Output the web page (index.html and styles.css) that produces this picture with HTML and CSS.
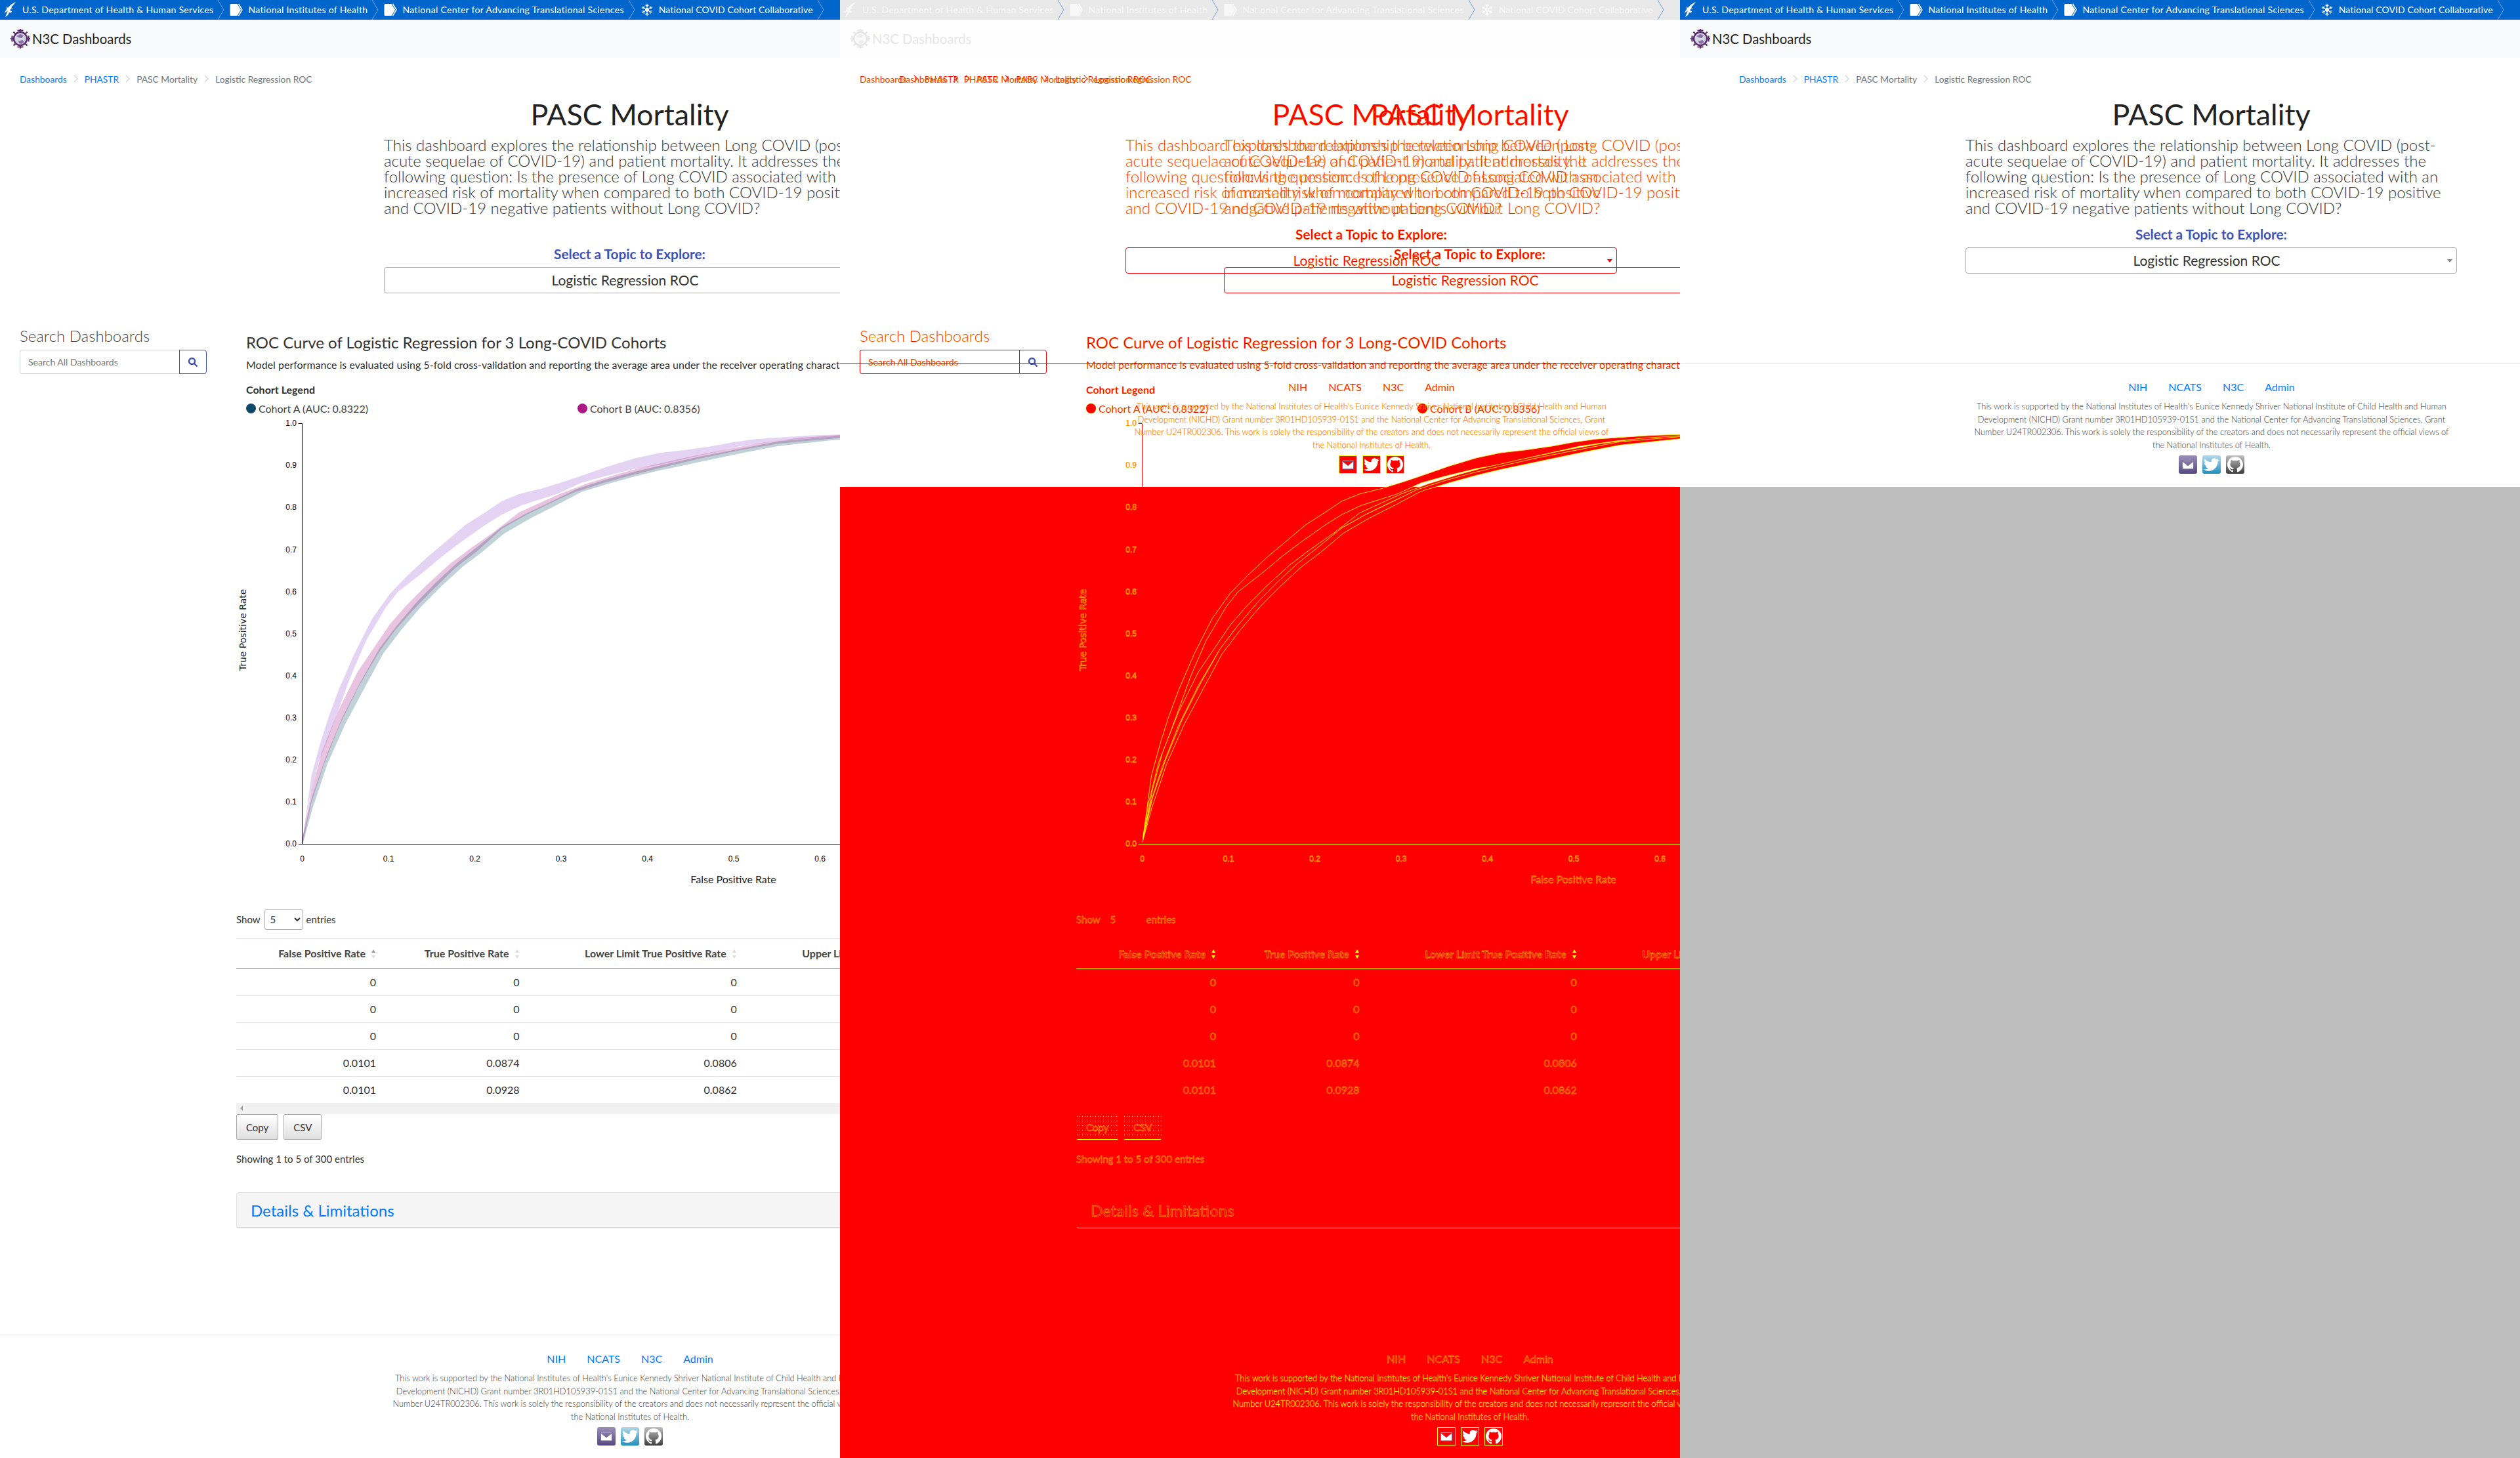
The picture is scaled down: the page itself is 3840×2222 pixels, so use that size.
FILE: index.html
```html
<!DOCTYPE html>
<html lang="en">
<head>
  <meta charset="UTF-8">
  <title>N3C Dashboards - PASC Mortality comparison</title>
  <link rel="stylesheet" href="styles.css">
</head>
<body>
  <!-- Shared drawings -->
  <svg class="sprite" aria-hidden="true">
    <defs>
      <path id="band-c" d="M199 1420L222 1220L245 1120L265 1045L290 965L330 855L375 750L420 675L465 620L515 565L570 510L610 470L660 432L700 400L745 378L800 362L860 340L905 322L970 295L1040 270L1100 255L1160 247L1230 235L1280 224L1340 214L1400 209L1480 203L1560 200L1560 205L1400 218L1300 235L1200 262L1100 290L1040 302L960 325L900 345L840 378L800 393L750 412L700 440L660 470L600 520L550 565L505 610L440 670L410 715L360 815L320 925L285 1040L262 1115L240 1180L215 1300Z"/>
      <path id="band-b" d="M199 1420L225 1260L250 1150L290 1030L340 910L380 840L420 770L460 715L510 655L570 590L620 545L680 495L745 435L800 405L850 378L920 347L1000 318L1050 302L1150 275L1250 250L1350 228L1450 212L1560 203L1560 208L1400 225L1300 245L1200 270L1100 298L1020 322L950 345L880 372L820 405L760 440L700 480L640 545L580 600L520 670L475 725L430 785L390 850L340 950L290 1070L250 1190L220 1300Z"/>
      <path id="band-a" d="M199 1420L225 1285L260 1165L300 1050L345 945L395 840L440 770L490 700L540 640L590 585L640 538L700 480L760 440L830 400L890 365L960 338L1030 315L1100 295L1200 268L1300 245L1400 222L1560 206L1560 212L1400 232L1300 255L1200 280L1100 305L1040 322L970 345L900 370L840 408L770 450L705 495L650 550L600 595L545 655L495 715L445 785L400 855L350 965L305 1065L260 1185L222 1320Z"/>
      <symbol id="icon-mail" viewBox="0 0 28 28"><path class="glyph" d="M4 7h20v15H4z M4 8l10 8 10-8"/></symbol>
      <symbol id="icon-bird" viewBox="0 0 24 24"><path class="glyph-solid" d="M23.953 4.57a10 10 0 01-2.825.775 4.958 4.958 0 002.163-2.723c-.951.555-2.005.959-3.127 1.184a4.92 4.92 0 00-8.384 4.482C7.69 8.095 4.067 6.13 1.64 3.162a4.822 4.822 0 00-.666 2.475c0 1.71.87 3.213 2.188 4.096a4.904 4.904 0 01-2.228-.616v.06a4.923 4.923 0 003.946 4.827 4.996 4.996 0 01-2.212.085 4.936 4.936 0 004.604 3.417 9.867 9.867 0 01-6.102 2.105c-.39 0-.779-.023-1.17-.067a13.995 13.995 0 007.557 2.209c9.053 0 13.998-7.496 13.998-13.985 0-.21 0-.42-.015-.63A9.935 9.935 0 0024 4.59z"/></symbol>
      <symbol id="icon-hub" viewBox="0 0 16 16"><path class="glyph-solid" d="M8 0C3.58 0 0 3.58 0 8c0 3.54 2.29 6.53 5.47 7.59.4.07.55-.17.55-.38 0-.19-.01-.82-.01-1.49-2.01.37-2.53-.49-2.69-.94-.09-.23-.48-.94-.82-1.13-.28-.15-.68-.52-.01-.53.63-.01 1.08.58 1.23.82.72 1.21 1.87.87 2.33.66.07-.52.28-.87.51-1.07-1.78-.2-3.64-.89-3.64-3.95 0-.87.31-1.59.82-2.15-.08-.2-.36-1.02.08-2.12 0 0 .67-.21 2.2.82.64-.18 1.32-.27 2-.27.68 0 1.36.09 2 .27 1.53-1.04 2.2-.82 2.2-.82.44 1.1.16 1.92.08 2.12.51.56.82 1.27.82 2.15 0 3.07-1.87 3.75-3.65 3.95.29.25.54.73.54 1.48 0 1.07-.01 1.93-.01 2.2 0 .21.15.46.55.38A8.013 8.013 0 0016 8c0-4.42-3.58-8-8-8z"/></symbol>
      <symbol id="icon-hhs" viewBox="0 0 24 26"><path d="M20 1C15 3 11 6 8 10L6 8C7 12 5 15 2 17C5 17 7 15 8 14L6 19L4 24L8 21L10 17C12 18 14 17 14 15L11 14L13 11L16 11L13 9C16 6 18 4 20 1Z"/></symbol>
      <symbol id="icon-arrow" viewBox="0 0 20 20"><path d="M2 1h9.5L17 10l-5.500 9H2a1.500 1.500 0 01-1.500-1.500v-15A1.500 1.500 0 012 1z"/><path class="arrow-edge" d="M13.500 1L19 10l-5.500 9"/></symbol>
      <symbol id="icon-flake" viewBox="0 0 24 24"><path class="flake" d="M12 1v22M2.500 6.500l19 11M21.500 6.500l-19 11M9 3l3 3 3-3M9 21l3-3 3 3M3 10l4-1-1-4M21 10l-4-1 1-4M3 14l4 1-1 4M21 14l-4 1 1 4"/><circle cx="12" cy="12" r="3.500"/></symbol>
      <symbol id="icon-sep" viewBox="0 0 12 30"><path class="sep-line" d="M1 0l9 15-9 15"/></symbol>
      <symbol id="icon-virus" viewBox="0 0 32 32">
        <circle cx="16" cy="16" r="10" class="virus-core"/>
        <path class="virus-land" d="M10 12l6-3 5 2-3 4-5-1zM13 20l6-2 3 3-4 3-4-1z"/>
        <circle cx="16" cy="16" r="10" class="virus-ring"/>
        <path class="virus-spike" d="M16 6V1M16 26v5M6 16H1M26 16h5M9 9L5.500 5.500M23 23l3.500 3.500M23 9l3.500-3.500M9 23l-3.500 3.500M11.500 3.500h9M11.500 28.500h9M3.500 11.500v9M28.500 11.500v9"/>
      </symbol>
      <symbol id="icon-search" viewBox="0 0 16 16"><circle cx="6.500" cy="6.500" r="4.500" class="search-ring"/><path class="search-ring" d="M10 10l4.500 4.500"/></symbol>
    </defs>
  </svg>

  <div class="compare">

    <!-- Left capture: dashboard with the chart open -->
    <section class="panel">
      <div class="page page-long">
        <div class="gov-bar">
          <a class="gov-item"><svg class="gov-icon gov-hhs"><use href="#icon-hhs"/></svg>U.S. Department of Health &amp; Human Services</a><svg class="gov-sep"><use href="#icon-sep"/></svg>
          <a class="gov-item"><svg class="gov-icon"><use href="#icon-arrow"/></svg>National Institutes of Health</a><svg class="gov-sep"><use href="#icon-sep"/></svg>
          <a class="gov-item"><svg class="gov-icon"><use href="#icon-arrow"/></svg>National Center for Advancing Translational Sciences</a><svg class="gov-sep"><use href="#icon-sep"/></svg>
          <a class="gov-item"><svg class="gov-icon"><use href="#icon-flake"/></svg>National COVID Cohort Collaborative</a><svg class="gov-sep"><use href="#icon-sep"/></svg>
        </div>
        <div class="brand-bar"><svg class="brand-logo"><use href="#icon-virus"/></svg>N3C Dashboards</div>

        <ol class="crumbs">
          <li><a href="#">Dashboards</a></li><li><a href="#">PHASTR</a></li><li>PASC Mortality</li><li>Logistic Regression ROC</li>
        </ol>
        <div class="topic">
          <h1>PASC Mortality</h1>
          <p class="intro">This dashboard explores the relationship between Long COVID (post-acute sequelae of COVID-19) and patient mortality. It addresses the following question: Is the presence of Long COVID associated with an increased risk of mortality when compared to both COVID-19 positive and COVID-19 negative patients without Long COVID?</p>
          <h4 class="topic-label">Select a Topic to Explore:</h4>
          <div class="topic-select"><span>Logistic Regression ROC</span><i class="caret"></i></div>
        </div>

        <div class="board">
          <aside class="sidebar">
            <h3>Search Dashboards</h3>
            <div class="search"><input type="text" placeholder="Search All Dashboards"><button><svg><use href="#icon-search"/></svg></button></div>
          </aside>
          <div class="content">
            <div class="chart-head">
              <h2>ROC Curve of Logistic Regression for 3 Long-COVID Cohorts</h2>
              <p class="chart-note">Model performance is evaluated using 5-fold cross-validation and reporting the average area under the receiver operating characteristic curve (AUC) for each cohort.</p>
              <h5>Cohort Legend</h5>
              <div class="legend">
                <span><i class="dot dot-a"></i>Cohort A (AUC: 0.8322)</span>
                <span><i class="dot dot-b"></i>Cohort B (AUC: 0.8356)</span>
              </div>
            </div>
            <svg class="roc" width="1400" height="715">
              <g transform="translate(-20 -75) scale(.6059 .5102)">
                <use href="#band-c" class="fill-c"/>
                <use href="#band-b" class="fill-b"/>
                <use href="#band-a" class="fill-a"/>
              </g>
              <path class="axis axis-y" d="M94.600 10.500h6v641"/>
              <path class="axis axis-x" d="M94.600 651.500H1416"/>
              <g class="ticks-y">
                <text x="92" y="14">1.0</text><text x="92" y="78">0.9</text><text x="92" y="142">0.8</text><text x="92" y="207">0.7</text><text x="92" y="271">0.6</text><text x="92" y="335">0.5</text><text x="92" y="399">0.4</text><text x="92" y="463">0.3</text><text x="92" y="527">0.2</text><text x="92" y="591">0.1</text><text x="92" y="655">0.0</text>
              </g>
              <g class="ticks-x">
                <text x="100.600" y="678">0</text><text x="232" y="678">0.1</text><text x="363.600" y="678">0.2</text><text x="495" y="678">0.3</text><text x="626.600" y="678">0.4</text><text x="758" y="678">0.5</text><text x="889.600" y="678">0.6</text>
              </g>
              <text class="label-x" x="757.600" y="711">False Positive Rate</text>
              <text class="label-y" transform="translate(15 325) rotate(-90)">True Positive Rate</text>
            </svg>
            <div class="show-row">Show <select><option>5</option><option>10</option></select> entries</div>
            <div class="table-wrap">
              <table class="rates">
                <colgroup><col class="col-1"><col class="col-2"><col class="col-3"><col class="col-3"></colgroup>
                <thead><tr><th>False Positive Rate<span class="sort sort-up"></span></th><th>True Positive Rate<span class="sort"></span></th><th>Lower Limit True Positive Rate<span class="sort"></span></th><th>Upper Limit True Positive Rate<span class="sort"></span></th></tr></thead>
                <tbody>
                  <tr><td>0</td><td>0</td><td>0</td><td></td></tr>
                  <tr><td>0</td><td>0</td><td>0</td><td></td></tr>
                  <tr><td>0</td><td>0</td><td>0</td><td></td></tr>
                  <tr><td>0.0101</td><td>0.0874</td><td>0.0806</td><td></td></tr>
                  <tr><td>0.0101</td><td>0.0928</td><td>0.0862</td><td></td></tr>
                </tbody>
              </table>
              <div class="h-scroll"><i></i></div>
            </div>
            <div class="export"><button>Copy</button><button>CSV</button></div>
            <p class="showing">Showing 1 to 5 of 300 entries</p>
            <div class="details"><a href="#">Details &amp; Limitations</a></div>
          </div>
        </div>

        <footer class="site-foot">
          <div class="foot-inner">
            <nav class="foot-links"><a href="#">NIH</a><a href="#">NCATS</a><a href="#">N3C</a><a href="#">Admin</a></nav>
            <p class="foot-text">This work is supported by the National Institutes of Health's Eunice Kennedy Shriver National Institute of Child Health and Human Development (NICHD) Grant number 3R01HD105939-01S1 and the National Center for Advancing Translational Sciences, Grant Number U24TR002306. This work is solely the responsibility of the creators and does not necessarily represent the official views of the National Institutes of Health.</p>
            <div class="social"><a class="s-mail"><svg><use href="#icon-mail"/></svg></a><a class="s-bird"><svg><use href="#icon-bird"/></svg></a><a class="s-hub"><svg><use href="#icon-hub"/></svg></a></div>
          </div>
        </footer>
      </div>
    </section>

    <!-- Middle: difference of the two captures -->
    <section class="panel panel-diff">
      <div class="diff-base">
        <div class="gov-bar">
          <a class="gov-item"><svg class="gov-icon gov-hhs"><use href="#icon-hhs"/></svg>U.S. Department of Health &amp; Human Services</a><svg class="gov-sep"><use href="#icon-sep"/></svg>
          <a class="gov-item"><svg class="gov-icon"><use href="#icon-arrow"/></svg>National Institutes of Health</a><svg class="gov-sep"><use href="#icon-sep"/></svg>
          <a class="gov-item"><svg class="gov-icon"><use href="#icon-arrow"/></svg>National Center for Advancing Translational Sciences</a><svg class="gov-sep"><use href="#icon-sep"/></svg>
          <a class="gov-item"><svg class="gov-icon"><use href="#icon-flake"/></svg>National COVID Cohort Collaborative</a><svg class="gov-sep"><use href="#icon-sep"/></svg>
        </div>
        <div class="brand-bar"><svg class="brand-logo"><use href="#icon-virus"/></svg>N3C Dashboards</div>
      </div>
      <div class="diff-block"></div>

      <div class="diff-layer page page-long">
        <div class="diff-skip"></div>
        <ol class="crumbs">
          <li><a href="#">Dashboards</a></li><li><a href="#">PHASTR</a></li><li>PASC Mortality</li><li>Logistic Regression ROC</li>
        </ol>
        <div class="topic">
          <h1>PASC Mortality</h1>
          <p class="intro">This dashboard explores the relationship between Long COVID (post-acute sequelae of COVID-19) and patient mortality. It addresses the following question: Is the presence of Long COVID associated with an increased risk of mortality when compared to both COVID-19 positive and COVID-19 negative patients without Long COVID?</p>
          <h4 class="topic-label">Select a Topic to Explore:</h4>
          <div class="topic-select"><span>Logistic Regression ROC</span><i class="caret"></i></div>
        </div>
        <div class="board">
          <aside class="sidebar">
            <h3>Search Dashboards</h3>
            <div class="search"><input type="text" placeholder="Search All Dashboards"><button><svg><use href="#icon-search"/></svg></button></div>
          </aside>
          <div class="content">
            <div class="chart-head">
              <h2>ROC Curve of Logistic Regression for 3 Long-COVID Cohorts</h2>
              <p class="chart-note">Model performance is evaluated using 5-fold cross-validation and reporting the average area under the receiver operating characteristic curve (AUC) for each cohort.</p>
              <h5>Cohort Legend</h5>
              <div class="legend">
                <span><i class="dot dot-a"></i>Cohort A (AUC: 0.8322)</span>
                <span><i class="dot dot-b"></i>Cohort B (AUC: 0.8356)</span>
              </div>
            </div>
            <svg class="roc" width="1400" height="715">
              <g transform="translate(-20 -75) scale(.6059 .5102)">
                <use href="#band-c" class="fill-c"/>
                <use href="#band-b" class="fill-b"/>
                <use href="#band-a" class="fill-a"/>
              </g>
              <path class="axis axis-y" d="M94.600 10.500h6v641"/>
              <path class="axis axis-x" d="M94.600 651.500H1416"/>
              <g class="ticks-y">
                <text x="92" y="14">1.0</text><text x="92" y="78">0.9</text><text x="92" y="142">0.8</text><text x="92" y="207">0.7</text><text x="92" y="271">0.6</text><text x="92" y="335">0.5</text><text x="92" y="399">0.4</text><text x="92" y="463">0.3</text><text x="92" y="527">0.2</text><text x="92" y="591">0.1</text><text x="92" y="655">0.0</text>
              </g>
              <g class="ticks-x">
                <text x="100.600" y="678">0</text><text x="232" y="678">0.1</text><text x="363.600" y="678">0.2</text><text x="495" y="678">0.3</text><text x="626.600" y="678">0.4</text><text x="758" y="678">0.5</text><text x="889.600" y="678">0.6</text>
              </g>
              <text class="label-x" x="757.600" y="711">False Positive Rate</text>
              <text class="label-y" transform="translate(15 325) rotate(-90)">True Positive Rate</text>
            </svg>
            <div class="show-row">Show <select><option>5</option><option>10</option></select> entries</div>
            <div class="table-wrap">
              <table class="rates">
                <colgroup><col class="col-1"><col class="col-2"><col class="col-3"><col class="col-3"></colgroup>
                <thead><tr><th>False Positive Rate<span class="sort sort-up"></span></th><th>True Positive Rate<span class="sort"></span></th><th>Lower Limit True Positive Rate<span class="sort"></span></th><th>Upper Limit True Positive Rate<span class="sort"></span></th></tr></thead>
                <tbody>
                  <tr><td>0</td><td>0</td><td>0</td><td></td></tr>
                  <tr><td>0</td><td>0</td><td>0</td><td></td></tr>
                  <tr><td>0</td><td>0</td><td>0</td><td></td></tr>
                  <tr><td>0.0101</td><td>0.0874</td><td>0.0806</td><td></td></tr>
                  <tr><td>0.0101</td><td>0.0928</td><td>0.0862</td><td></td></tr>
                </tbody>
              </table>
              <div class="h-scroll"><i></i></div>
            </div>
            <div class="export"><button>Copy</button><button>CSV</button></div>
            <p class="showing">Showing 1 to 5 of 300 entries</p>
            <div class="details"><a href="#">Details &amp; Limitations</a></div>
          </div>
        </div>
        <footer class="site-foot">
          <div class="foot-inner">
            <nav class="foot-links"><a href="#">NIH</a><a href="#">NCATS</a><a href="#">N3C</a><a href="#">Admin</a></nav>
            <p class="foot-text">This work is supported by the National Institutes of Health's Eunice Kennedy Shriver National Institute of Child Health and Human Development (NICHD) Grant number 3R01HD105939-01S1 and the National Center for Advancing Translational Sciences, Grant Number U24TR002306. This work is solely the responsibility of the creators and does not necessarily represent the official views of the National Institutes of Health.</p>
            <div class="social"><a class="s-mail"><svg><use href="#icon-mail"/></svg></a><a class="s-bird"><svg><use href="#icon-bird"/></svg></a><a class="s-hub"><svg><use href="#icon-hub"/></svg></a></div>
          </div>
        </footer>
      </div>

      <div class="diff-layer page page-short">
        <div class="diff-skip"></div>
        <ol class="crumbs">
          <li><a href="#">Dashboards</a></li><li><a href="#">PHASTR</a></li><li>PASC Mortality</li><li>Logistic Regression ROC</li>
        </ol>
        <div class="topic">
          <h1>PASC Mortality</h1>
          <p class="intro">This dashboard explores the relationship between Long COVID (post-acute sequelae of COVID-19) and patient mortality. It addresses the following question: Is the presence of Long COVID associated with an increased risk of mortality when compared to both COVID-19 positive and COVID-19 negative patients without Long COVID?</p>
          <h4 class="topic-label">Select a Topic to Explore:</h4>
          <div class="topic-select"><span>Logistic Regression ROC</span><i class="caret"></i></div>
        </div>
        <footer class="site-foot">
          <div class="foot-inner">
            <nav class="foot-links"><a href="#">NIH</a><a href="#">NCATS</a><a href="#">N3C</a><a href="#">Admin</a></nav>
            <p class="foot-text">This work is supported by the National Institutes of Health's Eunice Kennedy Shriver National Institute of Child Health and Human Development (NICHD) Grant number 3R01HD105939-01S1 and the National Center for Advancing Translational Sciences, Grant Number U24TR002306. This work is solely the responsibility of the creators and does not necessarily represent the official views of the National Institutes of Health.</p>
            <div class="social"><a class="s-mail"><svg><use href="#icon-mail"/></svg></a><a class="s-bird"><svg><use href="#icon-bird"/></svg></a><a class="s-hub"><svg><use href="#icon-hub"/></svg></a></div>
          </div>
        </footer>
      </div>
    </section>

    <!-- Right capture: dashboard with nothing loaded under the select -->
    <section class="panel panel-short">
      <div class="page page-short">
        <div class="gov-bar">
          <a class="gov-item"><svg class="gov-icon gov-hhs"><use href="#icon-hhs"/></svg>U.S. Department of Health &amp; Human Services</a><svg class="gov-sep"><use href="#icon-sep"/></svg>
          <a class="gov-item"><svg class="gov-icon"><use href="#icon-arrow"/></svg>National Institutes of Health</a><svg class="gov-sep"><use href="#icon-sep"/></svg>
          <a class="gov-item"><svg class="gov-icon"><use href="#icon-arrow"/></svg>National Center for Advancing Translational Sciences</a><svg class="gov-sep"><use href="#icon-sep"/></svg>
          <a class="gov-item"><svg class="gov-icon"><use href="#icon-flake"/></svg>National COVID Cohort Collaborative</a><svg class="gov-sep"><use href="#icon-sep"/></svg>
        </div>
        <div class="brand-bar"><svg class="brand-logo"><use href="#icon-virus"/></svg>N3C Dashboards</div>
        <ol class="crumbs">
          <li><a href="#">Dashboards</a></li><li><a href="#">PHASTR</a></li><li>PASC Mortality</li><li>Logistic Regression ROC</li>
        </ol>
        <div class="topic">
          <h1>PASC Mortality</h1>
          <p class="intro">This dashboard explores the relationship between Long COVID (post-acute sequelae of COVID-19) and patient mortality. It addresses the following question: Is the presence of Long COVID associated with an increased risk of mortality when compared to both COVID-19 positive and COVID-19 negative patients without Long COVID?</p>
          <h4 class="topic-label">Select a Topic to Explore:</h4>
          <div class="topic-select"><span>Logistic Regression ROC</span><i class="caret"></i></div>
        </div>
        <footer class="site-foot">
          <div class="foot-inner">
            <nav class="foot-links"><a href="#">NIH</a><a href="#">NCATS</a><a href="#">N3C</a><a href="#">Admin</a></nav>
            <p class="foot-text">This work is supported by the National Institutes of Health's Eunice Kennedy Shriver National Institute of Child Health and Human Development (NICHD) Grant number 3R01HD105939-01S1 and the National Center for Advancing Translational Sciences, Grant Number U24TR002306. This work is solely the responsibility of the creators and does not necessarily represent the official views of the National Institutes of Health.</p>
            <div class="social"><a class="s-mail"><svg><use href="#icon-mail"/></svg></a><a class="s-bird"><svg><use href="#icon-bird"/></svg></a><a class="s-hub"><svg><use href="#icon-hub"/></svg></a></div>
          </div>
        </footer>
      </div>
    </section>
  </div>
</body>
</html>
```

FILE: styles.css
```css
* {
  box-sizing: border-box;
}

html,
body {
  margin: 0;
  height: 2222px;
  overflow: hidden;
  background: #fff;
}

body {
  font-family: Lato, "Open Sans", sans-serif;
  font-size: 16px;
  color: #333;
}

a {
  text-decoration: none;
  color: #007bff;
}

.sprite {
  position: absolute;
  width: 0;
  height: 0;
}

.compare {
  display: flex;
  width: 3840px;
  height: 2222px;
}

.panel {
  position: relative;
  width: 1280px;
  height: 2222px;
  overflow: hidden;
  flex: none;
  background: #fff;
}

.panel-short {
  background: #bdbdbd;
}

/* Page scaffolding */
.page {
  background: #fff;
}

.page-long {
  width: 1580px;
  height: 2222px;
}

.page-short {
  width: 1280px;
  height: 742px;
}

.gov-bar {
  display: flex;
  align-items: center;
  height: 30px;
  width: 1280px;
  background: #0066cc;
  overflow: hidden;
}

.gov-item {
  display: flex;
  align-items: center;
  color: #fff;
  font-size: 14px;
  letter-spacing: 0.3px;
  white-space: nowrap;
  line-height: 30px;
}

.gov-item:last-of-type {
  letter-spacing: 0.12px;
}

.gov-icon {
  width: 20px;
  height: 22px;
  margin-right: 8px;
  fill: #fff;
  flex: none;
}

.gov-hhs {
  width: 24px;
  height: 26px;
  margin-left: 4px;
  margin-right: 6px;
}

.arrow-edge,
.sep-line,
.flake {
  fill: none;
  stroke-width: 1.500;
}

.arrow-edge {
  stroke: #fff;
}

.flake {
  stroke: #fff;
  stroke-width: 1.300;
}

.gov-sep {
  width: 12px;
  height: 30px;
  margin: 0 7px 0 6px;
  flex: none;
}

.sep-line {
  stroke: #6fa3df;
  stroke-width: 1;
}

.brand-bar {
  display: flex;
  align-items: center;
  height: 58px;
  width: 1280px;
  padding-left: 15px;
  background: #f8f9fa;
  color: #222;
  font-size: 20.300px;
}

.brand-logo {
  width: 32px;
  height: 32px;
  margin-right: 2px;
}

.virus-core {
  fill: #d4d6e6;
}

.virus-land {
  fill: #8d6fa6;
}

.virus-ring {
  fill: none;
  stroke: #5b2f6e;
  stroke-width: 2.500;
}

.virus-spike {
  fill: none;
  stroke: #5b2f6e;
  stroke-width: 2.200;
}

.crumbs {
  display: flex;
  list-style: none;
  margin: 0;
  padding: 22px 0 0;
  font-size: 13.800px;
  line-height: 21px;
  color: #6c757d;
  height: 43px;
}

.page-long .crumbs {
  padding-left: 30px;
}

.page-short .crumbs {
  padding-left: 90px;
}

.crumbs li + li::before {
  content: "";
  display: inline-block;
  width: 7px;
  height: 7px;
  margin: 0 12px 2px 7px;
  border-top: 1.500px solid #ccc;
  border-right: 1.500px solid #ccc;
  transform: rotate(45deg);
}

.topic {
  width: 749px;
  margin-left: 435px;
  padding-top: 19px;
}

.page-long .topic {
  margin-left: 585px;
}

h1 {
  margin: 0 0 11px;
  font-size: 44.800px;
  font-weight: 400;
  line-height: 48px;
  color: #222;
  text-align: center;
}

.intro {
  margin: 0 0 17px;
  font-size: 24px;
  font-weight: 300;
  line-height: 24px;
  color: #333;
}

.page-long .intro {
  margin-bottom: 47px;
}

.topic-label {
  margin: 0 0 9px;
  font-size: 20.800px;
  font-weight: 700;
  line-height: 22px;
  color: #3f51b5;
  text-align: center;
}

.topic-select {
  position: relative;
  height: 40px;
  padding-right: 14px;
  border: 1px solid #aaa;
  border-radius: 4px;
  font-size: 21px;
  line-height: 38px;
  text-align: center;
  color: #333;
}

.caret {
  position: absolute;
  top: 17px;
  right: 6px;
  border: 4px solid transparent;
  border-top: 5px solid #888;
  border-bottom: 0;
}

/* Sidebar and chart */
.board {
  display: flex;
  margin-top: 49.500px;
}

.sidebar {
  width: 340px;
  flex: none;
  padding-left: 30px;
}

.sidebar h3 {
  margin: 0 0 7.500px;
  font-size: 24px;
  font-weight: 300;
  line-height: 29px;
  color: #444;
}

.search {
  display: flex;
  width: 285px;
  height: 37px;
}

.search input {
  width: 243px;
  height: 37px;
  padding: 0 12px;
  border: 1px solid #ced4da;
  border-right: 0;
  border-radius: 4px 0 0 4px;
  font-family: Lato, sans-serif;
  font-size: 14px;
  background: #fff;
}

.search input::placeholder {
  color: #777;
}

.search button {
  display: flex;
  align-items: center;
  justify-content: center;
  width: 42px;
  height: 37px;
  padding: 0;
  border: 1px solid #3f51b5;
  border-radius: 0 4px 4px 0;
  background: #fff;
}

.search svg {
  width: 16px;
  height: 18px;
}

.search-ring {
  fill: none;
  stroke: #3f51b5;
  stroke-width: 2.400;
}

.content {
  width: 1240px;
  padding-left: 20px;
  padding-top: 10px;
}

.chart-head {
  padding-left: 15px;
}

.chart-head h2 {
  margin: 0;
  font-size: 24px;
  font-weight: 400;
  line-height: 29px;
  color: #333;
}

.chart-note {
  margin: 10px 0 18px;
  font-size: 16px;
  line-height: 20px;
  white-space: nowrap;
  color: #333;
}

.chart-head h5 {
  margin: 0 0 9px;
  font-size: 16px;
  font-weight: 700;
  line-height: 20px;
  color: #333;
}

.legend {
  display: grid;
  grid-template-columns: repeat(3, 505px);
  line-height: 20px;
  color: #444;
}

.legend span {
  display: flex;
  align-items: center;
}

.dot {
  width: 15px;
  height: 15px;
  margin-right: 4px;
  border-radius: 50%;
}

.dot-a {
  background: #0e4a67;
}

.dot-b {
  background: #ac1a87;
}

.roc {
  display: block;
  margin-top: 2px;
}

.fill-a {
  fill: #0e4a67;
  stroke: #0e4a67;
  stroke-width: 4;
  opacity: 0.25;
}

.fill-b {
  fill: #ac1a87;
  stroke: #ac1a87;
  stroke-width: 4;
  opacity: 0.25;
}

.fill-c {
  fill: #7c24c8;
  opacity: 0.2;
}

.axis {
  fill: none;
  stroke: #000;
  stroke-width: 1;
}

.ticks-y text,
.ticks-x text {
  font-family: "Liberation Sans", sans-serif;
  font-size: 12px;
  fill: #000;
}

.ticks-y text {
  text-anchor: end;
}

.ticks-x text {
  text-anchor: middle;
}

.label-x {
  font-family: Lato, sans-serif;
  font-size: 16px;
  text-anchor: middle;
  fill: #222;
}

.label-y {
  font-family: "DejaVu Sans", sans-serif;
  font-size: 14px;
  text-anchor: middle;
  fill: #222;
}

/* Data table */
.show-row {
  display: flex;
  align-items: center;
  gap: 5px;
  margin-top: 36px;
  height: 31px;
  font-size: 15px;
  color: #333;
}

.show-row select {
  width: 59px;
  height: 31px;
  padding: 0 4px;
  margin-left: 1px;
  border: 1px solid #aaa;
  border-radius: 3px;
  background: #fff;
  font-family: Lato, sans-serif;
  font-size: 15px;
  color: #333;
}

.table-wrap {
  margin-top: 13px;
  width: 1220px;
}

.rates {
  width: 1102px;
  table-layout: fixed;
  border-collapse: collapse;
}

.col-1 {
  width: 221px;
}

.col-2 {
  width: 218.500px;
}

.col-3 {
  width: 331.250px;
}

.rates th {
  position: relative;
  height: 46px;
  padding: 0 24px 0 0;
  border-top: 1px solid #dee2e6;
  border-bottom: 2px solid #b5b9bd;
  font-size: 16px;
  font-weight: 700;
  text-align: right;
  white-space: nowrap;
  color: #444;
}

.sort {
  position: absolute;
  top: 16px;
  right: 8px;
  width: 7px;
  height: 14px;
}

.sort::before,
.sort::after {
  content: "";
  position: absolute;
  left: 0;
  border-left: 3.500px solid transparent;
  border-right: 3.500px solid transparent;
}

.sort::before {
  top: 0;
  border-bottom: 5px solid #ddd;
}

.sort::after {
  bottom: 0;
  border-top: 5px solid #ddd;
}

.sort-up::before {
  border-bottom-color: #999;
}

.rates td {
  height: 41px;
  padding: 0 8px 0 0;
  border-bottom: 1px solid #dee2e6;
  font-size: 16px;
  text-align: right;
  color: #333;
}

.rates tr:last-child td {
  border-bottom: 0;
}

.h-scroll {
  position: relative;
  height: 17px;
  background: #f1f1f1;
}

.h-scroll i {
  position: absolute;
  top: 4px;
  left: 6px;
  border: 4px solid transparent;
  border-right: 4px solid #a3a3a3;
  border-left: 0;
}

.export {
  display: flex;
  gap: 8px;
}

.export button {
  height: 39px;
  padding: 0 14px;
  border: 1px solid #aaa;
  border-radius: 2px;
  background: linear-gradient(#fff, #e0e0e0);
  font-family: Lato, sans-serif;
  font-size: 15px;
  color: #333;
}

.showing {
  margin: 19px 0 41px;
  font-size: 15px;
  line-height: 20px;
  color: #333;
}

.details {
  width: 1220px;
  height: 55px;
  padding-left: 21px;
  border: 1px solid #e3e3e3;
  border-bottom: 2px solid #ddd;
  border-radius: 4px;
  background: #f5f5f5;
  font-size: 24px;
  line-height: 53px;
}

/* Footer */
.site-foot {
  padding-top: 24px;
  border-top: 1px solid #e5e5e5;
  text-align: center;
}

.page-short .site-foot {
  margin-top: 136px;
}

.page-long .site-foot {
  margin-top: 162px;
}

.foot-inner {
  margin-left: 340px;
}

.page-long .foot-inner {
  width: 1240px;
}

.page-short .foot-inner {
  width: 940px;
}

.foot-links {
  display: flex;
  justify-content: center;
  gap: 32px;
  font-size: 16px;
  line-height: 24px;
}

.foot-text {
  width: 740px;
  margin: 8px auto 6px;
  font-size: 12.800px;
  font-weight: 300;
  line-height: 19.500px;
  color: #333;
}

.social {
  display: flex;
  justify-content: center;
  gap: 8px;
}

.social a {
  display: flex;
  align-items: center;
  justify-content: center;
  width: 28px;
  height: 28px;
  border-radius: 3px;
}

.s-mail {
  background: linear-gradient(#9a8fb8, #554a80);
}

.s-bird {
  background: linear-gradient(#b5d8e8, #1f8fbe);
}

.s-hub {
  background: linear-gradient(#c0c0c0, #3d3d3d);
}

.social svg {
  width: 24px;
  height: 24px;
}

.glyph {
  fill: #fff;
  stroke: #6f6596;
  stroke-width: 1;
}

.glyph-solid {
  fill: #fff;
}

/* Difference panel */
.diff-base .gov-bar {
  background: #e9e9e9;
}

.diff-base .brand-bar {
  background: #fefefe;
  color: #e6e6e6;
}

.diff-base .gov-item {
  color: #f8f8f8;
}

.diff-base .gov-icon,
.diff-base .arrow-edge {
  fill: #f8f8f8;
}

.diff-base .flake,
.diff-base .arrow-edge {
  stroke: #f8f8f8;
  fill: none;
}

.diff-base .sep-line {
  stroke: #f2f2f2;
}

.diff-base .brand-logo {
  opacity: 0.12;
  filter: grayscale(1);
}

.diff-block {
  position: absolute;
  left: 0;
  top: 742px;
  width: 1280px;
  height: 1480px;
  background: #f00;
}

.diff-layer {
  position: absolute;
  top: 0;
  left: 0;
  background: transparent;
  -webkit-text-stroke: 0.2px #ff0;
}

.diff-skip {
  height: 88px;
}

.diff-layer * {
  color: #f00 !important;
}

/* text that lands on the solid block only shows its yellow edge */
.diff-layer .show-row,
.diff-layer .rates,
.diff-layer .export,
.diff-layer .showing,
.diff-layer .details,
.diff-layer.page-long .site-foot {
  -webkit-text-stroke: 0.35px #ff0;
}

.diff-layer .topic-select,
.diff-layer .search input,
.diff-layer .search button,
.diff-layer .show-row select,
.diff-layer .site-foot {
  border-color: #f00;
  background: transparent;
}

.diff-layer .search-ring {
  stroke: #f00;
}

.diff-layer .caret {
  border-top-color: #f00;
}

.diff-layer input::placeholder {
  color: #f00;
}

.diff-layer .crumbs li + li::before {
  border-color: #f00;
}

.diff-layer .dot {
  background: #f00;
  box-shadow: 0 0 0 0.5px #ff0;
}

.diff-layer .fill-a,
.diff-layer .fill-b,
.diff-layer .fill-c {
  fill: #f00;
  opacity: 1;
  stroke: #ff0;
  stroke-width: 1.500;
}

.diff-layer .axis-y {
  stroke: #f00;
}

.diff-layer .axis-x {
  stroke: #ff0;
}

.diff-layer .roc text {
  fill: #f00;
  stroke: #ff0;
  stroke-width: 0.4px;
}

.diff-layer .rates th {
  border-top-color: #f00;
  border-bottom: 1px solid #ff0;
}

.diff-layer .rates td {
  border-bottom-color: #f00;
}

.diff-layer .sort::before {
  border-bottom-color: #ff0;
}

.diff-layer .sort::after {
  border-top-color: #ff0;
}

.diff-layer .h-scroll {
  background: transparent;
}

.diff-layer .h-scroll i {
  display: none;
}

.diff-layer .export button {
  border: 1px solid transparent;
  border-bottom-color: #ff0;
  background-image: repeating-linear-gradient(0deg, #f00 0 6px, transparent 6px 7px), repeating-linear-gradient(90deg, #ff0 0 1px, #f00 1px 4px);
}

.diff-layer .details {
  border-color: transparent;
  border-bottom: 1px solid #ff0;
  background: transparent;
}

.diff-layer .social a {
  background: #f00;
  border: 1px solid #ff0;
  border-radius: 0;
}

.diff-layer .glyph,
.diff-layer .glyph-solid {
  fill: #f00;
  stroke: #ff0;
  stroke-width: 0.6;
}

.diff-layer.page-short .glyph,
.diff-layer.page-short .glyph-solid {
  fill: #fff;
}
```
